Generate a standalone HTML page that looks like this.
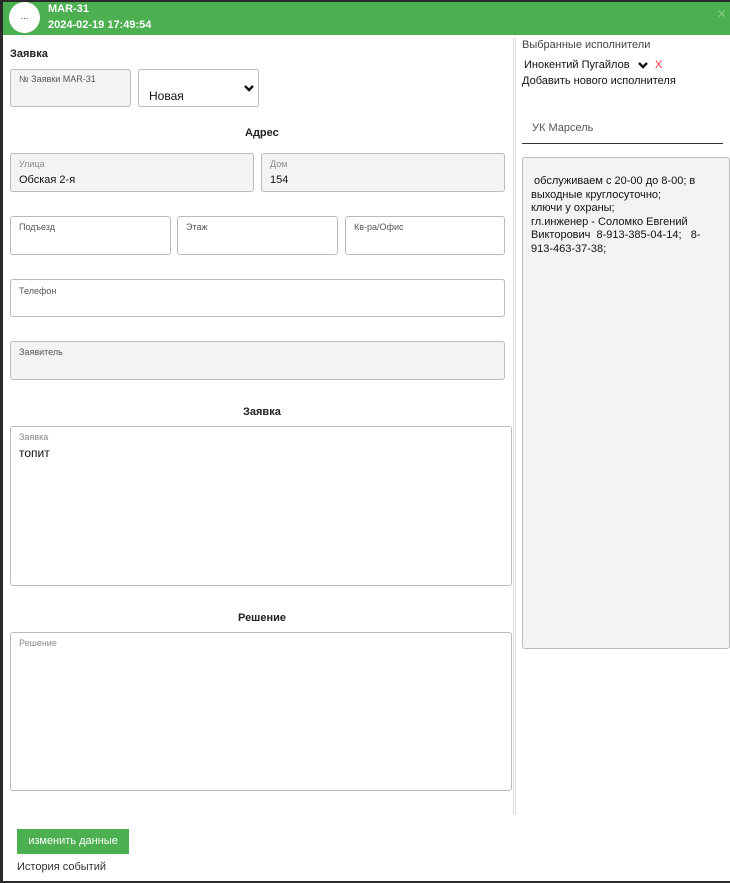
<!DOCTYPE html>
<html><head><meta charset="utf-8"><style>
*{box-sizing:border-box;margin:0;padding:0}
body{width:730px;height:883px;background:#2b2b2b;font-family:"Liberation Sans",sans-serif;position:relative;overflow:hidden;color:#111}
.m{position:absolute;left:3px;top:2px;width:727px;height:879px;background:#fff}
.a{position:absolute}
.hd{left:3px;top:2px;width:727px;height:33px;background:#4caf50}
.box{position:absolute;border:1px solid #bbb;border-radius:3px;background:#fff}
.g{background:#f3f3f3}
.lb{position:absolute;left:8px;top:7px;font-size:9px;color:#555}
.v{position:absolute;left:8px;font-size:11px;color:#111}
.h{position:absolute;font-size:11px;font-weight:bold;color:#222}
</style></head><body>
<div class="m"></div>
<div class="a hd"></div>
<div class="a" style="left:9px;top:2px;width:31px;height:31px;border-radius:50%;background:#fff;font-size:9px;text-align:center;line-height:28px;color:#33a">...</div>
<div class="a" style="left:48px;top:3px;font-size:11px;font-weight:bold;color:#fff">MAR-31</div>
<div class="a" style="left:48px;top:19px;font-size:11px;font-weight:bold;color:#fff">2024-02-19 17:49:54</div>
<div class="a" style="left:717px;top:7px;font-size:16px;color:#8c8;line-height:16px">×</div>

<div class="h" style="left:10px;top:48px">Заявка</div>
<div class="box g" style="left:10px;top:69px;width:121px;height:38px"><div class="lb" style="top:4px;font-size:9px">№ Заявки MAR-31</div></div>
<div class="box" style="left:138px;top:69px;width:121px;height:38px"><div class="v" style="left:10px;top:19px;font-size:12px">Новая</div>
<svg class="a" style="left:104px;top:14px" width="12" height="9" viewBox="0 0 12 9"><path d="M2 2 L6 6 L10 2" stroke="#111" stroke-width="2.4" fill="none"/></svg></div>

<div class="h" style="left:245px;top:127px">Адрес</div>
<div class="box g" style="left:10px;top:153px;width:244px;height:39px"><div class="lb" style="top:5px;color:#888">Улица</div><div class="v" style="top:20px">Обская 2-я</div></div>
<div class="box g" style="left:261px;top:153px;width:244px;height:39px"><div class="lb" style="top:5px;color:#888">Дом</div><div class="v" style="top:20px">154</div></div>

<div class="box" style="left:10px;top:216px;width:161px;height:39px"><div class="lb" style="top:5px">Подъезд</div></div>
<div class="box" style="left:177px;top:216px;width:161px;height:39px"><div class="lb" style="top:5px">Этаж</div></div>
<div class="box" style="left:345px;top:216px;width:160px;height:39px"><div class="lb" style="top:5px">Кв-ра/Офис</div></div>
<div class="box" style="left:10px;top:279px;width:495px;height:38px"><div class="lb" style="top:6px">Телефон</div></div>
<div class="box g" style="left:10px;top:341px;width:495px;height:39px"><div class="lb" style="top:5px">Заявитель</div></div>

<div class="h" style="left:243px;top:406px">Заявка</div>
<div class="box" style="left:10px;top:426px;width:502px;height:160px"><div class="lb" style="top:5px;color:#888">Заявка</div><div class="v" style="top:19px;font-size:12px">топит</div></div>
<div class="h" style="left:238px;top:612px">Решение</div>
<div class="box" style="left:10px;top:632px;width:502px;height:159px"><div class="lb" style="top:5px;color:#888">Решение</div></div>

<div class="a" style="left:513px;top:38px;width:3px;height:777px;border-left:1px solid #ddd;border-right:1px solid #ddd"></div>

<div class="a" style="left:17px;top:829px;width:112px;height:25px;background:#4caf50;color:#fff;font-size:11px;text-align:center;line-height:25px">изменить данные</div>
<div class="a" style="left:17px;top:861px;font-size:11px;color:#333">История событий</div>

<div class="a" style="left:522px;top:39px;font-size:11px;color:#444">Выбранные исполнители</div>
<div class="a" style="left:524px;top:59px;font-size:11px;color:#111">Инокентий Пугайлов</div>
<svg class="a" style="left:637px;top:61px" width="12" height="9" viewBox="0 0 12 9"><path d="M2 2 L6 6 L10 2" stroke="#111" stroke-width="2.4" fill="none"/></svg>
<div class="a" style="left:655px;top:59px;font-size:11px;color:#e33">X</div>
<div class="a" style="left:522px;top:75px;font-size:11px;color:#111">Добавить нового исполнителя</div>
<div class="a" style="left:532px;top:122px;font-size:11px;color:#555">УК Марсель</div>
<div class="a" style="left:522px;top:143px;width:201px;height:1px;background:#333"></div>
<div class="box g" style="left:522px;top:157px;width:208px;height:492px;padding:17px 8px 0 8px;font-size:11px;line-height:13.5px;color:#111">&nbsp;обслуживаем с 20-00 до 8-00; в выходные круглосуточно;<br>ключи у охраны;<br>гл.инженер - Соломко Евгений Викторович&nbsp; 8-913-385-04-14;&nbsp;&nbsp; 8-913-463-37-38;</div>
</body></html>
